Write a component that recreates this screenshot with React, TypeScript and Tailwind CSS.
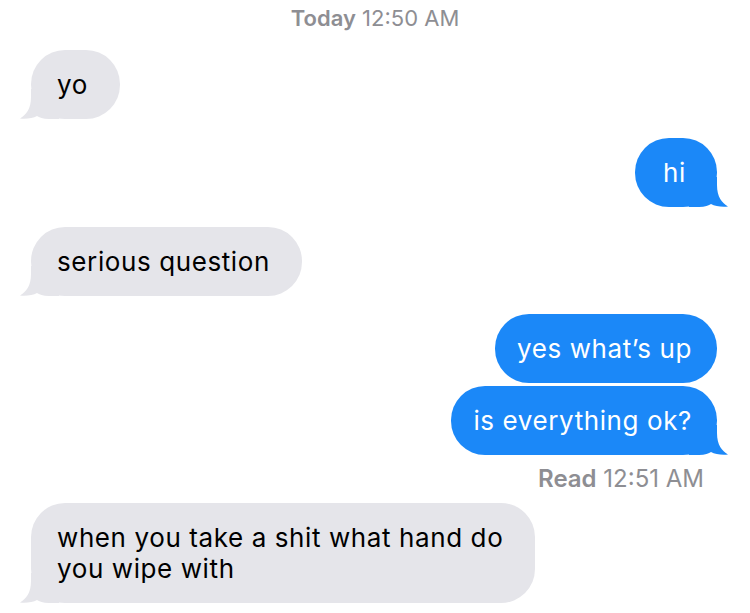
import React from "react";

const GRAY = "#e5e5ea";
const BLUE = "#1b88f8";

function Tail({ side, color }: { side: "left" | "right"; color: string }) {
  return (
    <svg
      width="40"
      height="30"
      viewBox="0 0 40 30"
      className={
        side === "left"
          ? "absolute left-[-12px] bottom-0"
          : "absolute right-[-12px] bottom-0 scale-x-[-1]"
      }
    >
      <path
        d="M12 0 H40 V30 H30 C24 30 20 28.5 18 27 C14 29.5 7 30 1 29.5 C7 26 12 20 12 8 Z"
        fill={color}
      />
    </svg>
  );
}

function Bubble({
  side,
  text,
  tail = true,
  className = "",
}: {
  side: "left" | "right";
  text: React.ReactNode;
  tail?: boolean;
  className?: string;
}) {
  const color = side === "left" ? GRAY : BLUE;
  return (
    <div className={side === "left" ? "flex justify-start pl-[31px]" : "flex justify-end pr-[33px]"}>
      <div
        className={
          "relative rounded-[34px] py-[19px] text-[26px] leading-[31px] tracking-[0.6px] whitespace-nowrap " +
          (side === "left"
            ? "bg-[#e5e5ea] text-black pl-[26px] pr-[32px] "
            : "bg-[#1b88f8] text-white pl-[22px] pr-[25px] text-center ") +
          className
        }
      >
        {tail && <Tail side={side} color={color} />}
        <span className="relative">{text}</span>
      </div>
    </div>
  );
}

export default function App() {
  return (
    <div
      className="w-[750px] h-[613px] overflow-hidden bg-white flex flex-col"
      style={{ fontFamily: "Inter, 'Noto Sans', sans-serif" }}
    >
      <div className="pt-[5px] text-center text-[22px] leading-[26px] text-[#8e8e93]">
        <span className="font-semibold">Today</span> 12:50 AM
      </div>
      <div className="mt-[19px]">
        <Bubble side="left" text="yo" />
      </div>
      <div className="mt-[19px]">
        <Bubble side="right" text="hi" className="min-w-[82px]" />
      </div>
      <div className="mt-[20px]">
        <Bubble side="left" text="serious question" />
      </div>
      <div className="mt-[18px]">
        <Bubble side="right" text="yes what’s up" tail={false} />
      </div>
      <div className="mt-[3px]">
        <Bubble side="right" text="is everything ok?" />
      </div>
      <div className="mt-[11px] pr-[46px] text-right text-[24px] leading-[26px] text-[#8e8e93]">
        <span className="font-semibold">Read</span> 12:51 AM
      </div>
      <div className="mt-[11px]">
        <Bubble
          side="left"
          text={
            <>
              when you take a shit what hand do
              <br />
              you wipe with
            </>
          }
        />
      </div>
    </div>
  );
}
